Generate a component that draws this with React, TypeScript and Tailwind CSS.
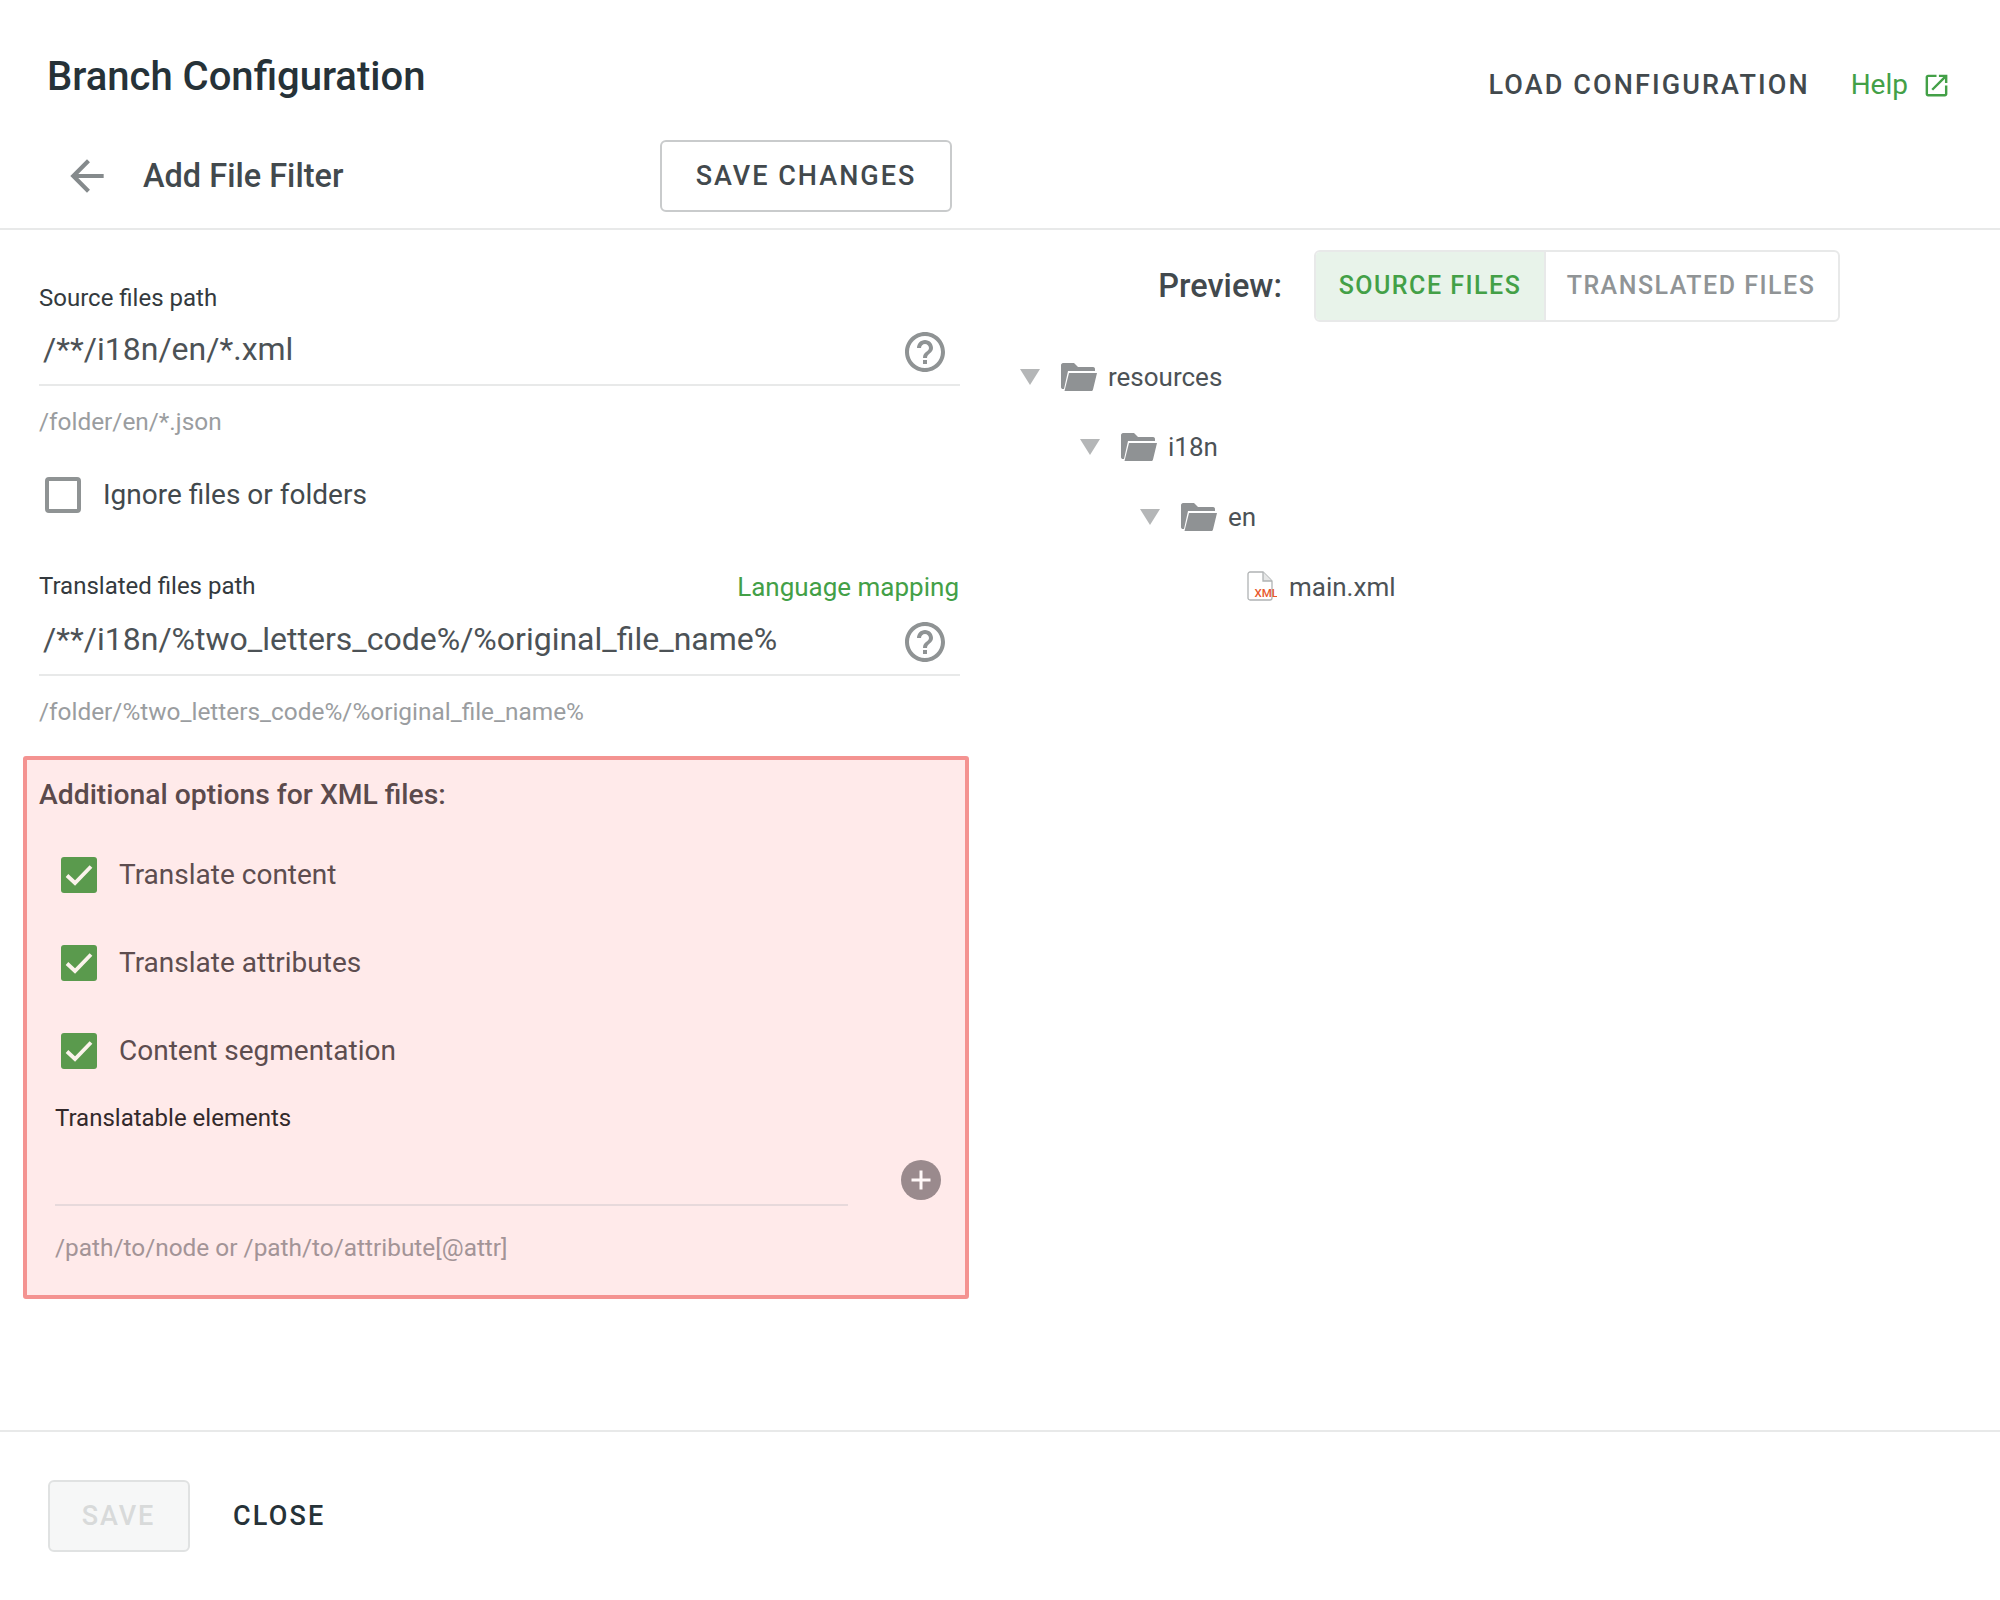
import React from "react";

const font = { fontFamily: "Roboto, sans-serif" };

function Check() {
  return (
    <span className="flex h-[36px] w-[36px] shrink-0 items-center justify-center rounded-[3px] bg-[#5a9a4d]">
      <svg viewBox="0 0 36 36" className="h-[36px] w-[36px]" fill="none" stroke="#fbf3ec" strokeWidth="3.8">
        <path d="M6 18.5 L14 26 L30 9.5" />
      </svg>
    </span>
  );
}

function CheckRow({ label }: { label: string }) {
  return (
    <div className="flex h-[36px] items-center pl-[22px]">
      <Check />
      <span className="ml-[22px] text-[28px] text-[#5d4d4f]">{label}</span>
    </div>
  );
}

function PathField({ value }: { value: string }) {
  return (
    <div className="flex h-[73px] items-center justify-between border-b-2 border-[#e8e9e9] pl-[4px] pr-[11px]">
      <span className="text-[32px] text-[#4c5256]">{value}</span>
      <svg viewBox="0 0 24 24" className="mt-[6px] h-[48px] w-[48px]" fill="#8f9394">
        <path d="M11 18h2v-2h-2v2zm1-16C6.48 2 2 6.48 2 12s4.48 10 10 10 10-4.48 10-10S17.52 2 12 2zm0 18c-4.41 0-8-3.59-8-8s3.59-8 8-8 8 3.59 8 8-3.59 8-8 8zm0-14c-2.21 0-4 1.79-4 4h2c0-1.1.9-2 2-2s2 .9 2 2c0 2-3 1.75-3 5h2c0-2.25 3-2.5 3-5 0-2.21-1.79-4-4-4z" />
      </svg>
    </div>
  );
}

function Triangle() {
  return (
    <svg viewBox="0 0 20 16" className="h-[16px] w-[20px]">
      <path d="M0 0H20L10 16Z" fill="#b4b6b7" />
    </svg>
  );
}

function Folder() {
  return (
    <svg viewBox="0 0 36 28" className="ml-[21px] h-[28px] w-[36px]">
      <path d="M2 0H13L17 4H32C33.5 4 34 5 34 6V8H7L3 26H2C1 26 0 25.5 0 24V2C0 1 1 0 2 0Z" fill="#8f9294" />
      <path d="M8 10H36L32 26.5C31.8 27.5 31 28 30 28H3.5Z" fill="#8f9294" />
    </svg>
  );
}

function TreeFolder({ label, indent }: { label: string; indent: string }) {
  return (
    <div className={`flex h-[70px] items-center ${indent}`}>
      <Triangle />
      <Folder />
      <span className="ml-[11px] text-[26px] text-[#4c5256]">{label}</span>
    </div>
  );
}

function XmlFile() {
  return (
    <svg viewBox="0 0 30 32" className="h-[32px] w-[30px]">
      <path d="M1 3C1 2 2 1 3 1H16L25 10V27C25 28 24 29 23 29H3C2 29 1 28 1 27Z" fill="#fff" stroke="#b0b3b4" strokeWidth="1.3" />
      <path d="M16 1V10H25" fill="#e6e7e7" stroke="#b0b3b4" strokeWidth="1.3" />
      <text x="7.5" y="26" fontSize="11.5" fontWeight="500" fill="#e8572c" style={font}>XML</text>
    </svg>
  );
}

export default function App() {
  return (
    <div className="flex h-[1600px] w-[2000px] flex-col bg-white" style={font}>
      <header className="h-[230px] shrink-0 border-b-2 border-[#e8e9e9]">
        <div className="flex items-start justify-between pl-[47px] pr-[49px] pt-[51px]">
          <h1 className="text-[40px] font-medium leading-[52px] text-[#263238]">Branch Configuration</h1>
          <div className="flex items-center pt-[13px]">
            <span className="text-[27px] font-medium tracking-[2.1px] text-[#42494d]">LOAD CONFIGURATION</span>
            <span className="ml-[41px] text-[28px] text-[#43a047]">Help</span>
            <svg viewBox="0 0 24 24" className="ml-[14px] h-[29px] w-[29px]" fill="#43a047">
              <path d="M19 19H5V5h7V3H5c-1.11 0-2 .9-2 2v14c0 1.1.89 2 2 2h14c1.1 0 2-.9 2-2v-7h-2v7zM14 3v2h3.59l-9.83 9.83 1.41 1.41L19 6.41V10h2V3h-7z" />
            </svg>
          </div>
        </div>
        <div className="mt-[34px] flex w-[952px] items-center justify-between pl-[62px]">
          <div className="flex items-center">
            <svg viewBox="0 0 24 24" className="h-[50px] w-[50px]" fill="#858a8c">
              <path d="M20 11H7.83l5.59-5.59L12 4l-8 8 8 8 1.41-1.41L7.83 13H20v-2z" />
            </svg>
            <span className="ml-[31px] text-[32.5px] font-medium text-[#42494d]">Add File Filter</span>
          </div>
          <button className="flex h-[72px] w-[292px] items-center justify-center rounded-[6px] border-2 border-[#c9cbcc] text-[27px] font-medium tracking-[2px] text-[#42494d]">
            SAVE CHANGES
          </button>
        </div>
      </header>

      <main className="flex flex-1">
        <section className="w-[1000px] shrink-0 pl-[23px] pt-[53px]">
          <div className="w-[937px] pl-[16px]">
            <div className="text-[24px] leading-[30px] text-[#343a3e]">Source files path</div>
            <PathField value="/**/i18n/en/*.xml" />
            <div className="mt-[22px] text-[24.4px] leading-[28px] text-[#9a9da0]">/folder/en/*.json</div>
            <label className="mt-[41px] flex h-[36px] items-center pl-[6px]">
              <span className="h-[36px] w-[36px] rounded-[4px] border-4 border-[#8f9394]" />
              <span className="ml-[22px] text-[28px] text-[#42494d]">Ignore files or folders</span>
            </label>
            <div className="mb-[1px] mt-[59px] flex items-start justify-between pr-[1px]">
              <span className="text-[24px] leading-[28px] text-[#343a3e]">Translated files path</span>
              <span className="text-[26px] leading-[30px] text-[#43a047]">Language mapping</span>
            </div>
            <PathField value="/**/i18n/%two_letters_code%/%original_file_name%" />
            <div className="mt-[22px] text-[24.4px] leading-[28px] text-[#9a9da0]">/folder/%two_letters_code%/%original_file_name%</div>
          </div>

          <div className="mt-[30px] h-[543px] w-[946px] rounded-[3px] border-4 border-[#f49391] bg-[#ffeaea] pl-[12px] pr-[24px]">
            <h2 className="pt-[17px] text-[28.3px] font-medium leading-[36px] text-[#5b4a4c]">Additional options for XML files:</h2>
            <div className="mt-[44px] flex flex-col gap-[52px]">
              <CheckRow label="Translate content" />
              <CheckRow label="Translate attributes" />
              <CheckRow label="Content segmentation" />
            </div>
            <div className="mt-[34px] pl-[16px] text-[24px] leading-[30px] text-[#33292b]">Translatable elements</div>
            <div className="flex items-end justify-between pl-[16px]">
              <div className="h-[73px] w-[793px] border-b-2 border-[#e7d9db]" />
              <span className="mb-[6px] flex h-[40px] w-[40px] items-center justify-center rounded-full bg-[#9a8a8d]">
                <svg viewBox="0 0 24 24" className="h-[24px] w-[24px]" fill="#fff8f8">
                  <path d="M10.5 2.5h3v8h8v3h-8v8h-3v-8h-8v-3h8z" />
                </svg>
              </span>
            </div>
            <div className="mt-[27px] pl-[16px] text-[24.4px] leading-[30px] text-[#a39497]">/path/to/node or /path/to/attribute[@attr]</div>
          </div>
        </section>

        <section className="flex-1 pt-[20px]">
          <div className="flex w-[840px] items-center justify-end">
            <span className="mr-[32px] text-[32.5px] font-medium text-[#42494d]">Preview:</span>
            <div className="flex h-[72px] w-[526px] overflow-hidden rounded-[6px] border-2 border-[#e8e9e9] text-[25px] tracking-[1.5px]">
              <span className="flex w-[230px] items-center justify-center border-r-2 border-[#e8e9e9] bg-[#e8f3ea] font-medium text-[#43a047]">SOURCE FILES</span>
              <span className="flex flex-1 items-center justify-center pr-[2px] font-medium text-[#909496]">TRANSLATED FILES</span>
            </div>
          </div>
          <div className="mt-[20px] pl-[20px]">
            <TreeFolder label="resources" indent="pl-0" />
            <TreeFolder label="i18n" indent="pl-[60px]" />
            <TreeFolder label="en" indent="pl-[120px]" />
            <div className="flex h-[70px] items-center pl-[227px]">
              <XmlFile />
              <span className="ml-[12px] text-[26px] text-[#4c5256]">main.xml</span>
            </div>
          </div>
        </section>
      </main>

      <footer className="flex h-[170px] shrink-0 items-start border-t-2 border-[#e8e9e9] pl-[48px] pt-[48px]">
        <button className="flex h-[72px] w-[142px] items-center justify-center rounded-[6px] border-2 border-[#e0e2e2] bg-[#f6f7f7] pr-[1px] text-[27px] font-medium tracking-[1.9px] text-[#d8dada]">SAVE</button>
        <span className="ml-[43px] flex h-[72px] items-center text-[27px] font-medium tracking-[2.2px] text-[#263238]">CLOSE</span>
      </footer>
    </div>
  );
}
